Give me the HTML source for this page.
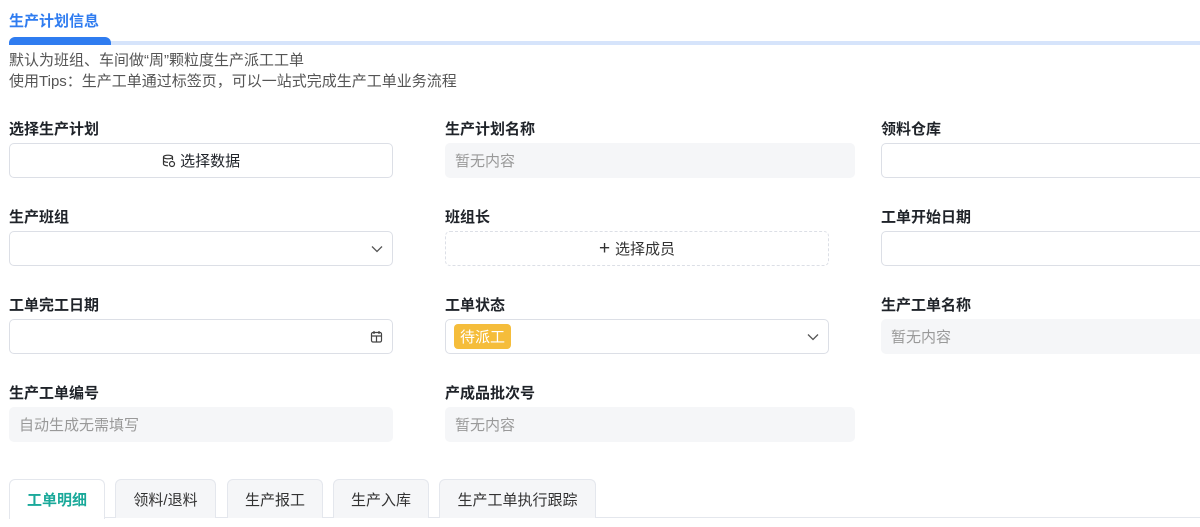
<!DOCTYPE html><html><head><meta charset="utf-8"><style>
*{box-sizing:border-box;margin:0;padding:0}
body{width:1200px;height:527px;overflow:hidden;background:#fff;font-family:"Liberation Sans","Noto Sans CJK SC",sans-serif;color:#1f2329;position:relative}
.a{position:absolute}
.title{left:9px;top:10px;font-size:15px;font-weight:bold;color:#2f7cf0}
.bar{left:9px;top:37px;width:102px;height:8px;background:#2f7cf0;border-radius:6px 6px 0 0}
.line{left:9px;top:41px;width:1191px;height:4px;background:#d6e4fb}
.desc{left:9px;font-size:15px;color:#555}
.lab{font-size:15px;font-weight:bold;color:#1f2329}
.box{height:35px;border:1px solid #dcdfe6;border-radius:5px;background:#fff;font-size:15px;display:flex;align-items:center;padding:0 9px}
.ro{background:#f5f6f8;border-color:#f5f6f8;color:#999}
.tab{top:479px;height:39px;border:1px solid #e4e7ed;border-bottom:none;border-radius:6px 6px 0 0;background:#f5f6f8;font-size:15px;color:#333;display:flex;align-items:center;justify-content:center}
</style></head><body>
<div class="a title">生产计划信息</div>
<div class="a line"></div><div class="a bar"></div>
<div class="a desc" style="top:49px">默认为班组、车间做“周”颗粒度生产派工工单</div>
<div class="a desc" style="top:70px">使用Tips：生产工单通过标签页，可以一站式完成生产工单业务流程</div>

<div class="a lab" style="left:9px;top:118px">选择生产计划</div>
<div class="a box" style="left:9px;top:143px;width:384px;justify-content:center"><svg width="14" height="14" viewBox="0 0 14 14" fill="none" stroke="#333" stroke-width="1.2"><ellipse cx="6" cy="3" rx="4.5" ry="1.8"/><path d="M1.5 3v7c0 1 2 1.8 4.5 1.8M10.5 3v3M1.5 6.5c0 1 2 1.8 4.5 1.8"/><circle cx="10" cy="10" r="2.5"/></svg>&nbsp;选择数据</div>
<div class="a lab" style="left:445px;top:118px">生产计划名称</div>
<div class="a box ro" style="left:445px;top:143px;width:410px">暂无内容</div>
<div class="a lab" style="left:881px;top:118px">领料仓库</div>
<div class="a box" style="left:881px;top:143px;width:330px"></div>

<div class="a lab" style="left:9px;top:206px">生产班组</div>
<div class="a box" style="left:9px;top:231px;width:384px;justify-content:flex-end"><svg width="12" height="8" viewBox="0 0 12 8" fill="none" stroke="#555" stroke-width="1.3"><path d="M1 1.5l5 5 5-5"/></svg></div>
<div class="a lab" style="left:445px;top:206px">班组长</div>
<div class="a box" style="left:445px;top:231px;width:384px;border-style:dashed;justify-content:center;color:#333"><span style="font-size:19px;margin-right:5px;font-weight:300">+</span>选择成员</div>
<div class="a lab" style="left:881px;top:206px">工单开始日期</div>
<div class="a box" style="left:881px;top:231px;width:330px"></div>

<div class="a lab" style="left:9px;top:294px">工单完工日期</div>
<div class="a box" style="left:9px;top:319px;width:384px;justify-content:flex-end"><svg width="13" height="13" viewBox="0 0 13 13" fill="none" stroke="#444" stroke-width="1.2"><rect x="1.5" y="2.5" width="10" height="9.5" rx="1.5"/><path d="M4 1v3M9 1v3M1.5 6h10M6.5 6v6"/></svg></div>
<div class="a lab" style="left:445px;top:294px">工单状态</div>
<div class="a box" style="left:445px;top:319px;width:384px;justify-content:space-between;padding-left:8px"><span style="background:#f5bd3b;color:#fff;border-radius:4px;padding:2px 6px;font-size:15px">待派工</span><svg width="12" height="8" viewBox="0 0 12 8" fill="none" stroke="#555" stroke-width="1.3"><path d="M1 1.5l5 5 5-5"/></svg></div>
<div class="a lab" style="left:881px;top:294px">生产工单名称</div>
<div class="a box ro" style="left:881px;top:319px;width:330px">暂无内容</div>

<div class="a lab" style="left:9px;top:382px">生产工单编号</div>
<div class="a box ro" style="left:9px;top:407px;width:384px">自动生成无需填写</div>
<div class="a lab" style="left:445px;top:382px">产成品批次号</div>
<div class="a box ro" style="left:445px;top:407px;width:410px">暂无内容</div>

<div class="a" style="left:9px;top:517px;width:1191px;height:1px;background:#e4e7ed"></div>
<div class="a tab" style="left:9px;width:96px;background:#fff;color:#1aa99a;font-weight:bold;height:40px">工单明细</div>
<div class="a tab" style="left:115px;width:101px">领料/退料</div>
<div class="a tab" style="left:227px;width:96px">生产报工</div>
<div class="a tab" style="left:333px;width:96px">生产入库</div>
<div class="a tab" style="left:439px;width:157px">生产工单执行跟踪</div>
</body></html>
